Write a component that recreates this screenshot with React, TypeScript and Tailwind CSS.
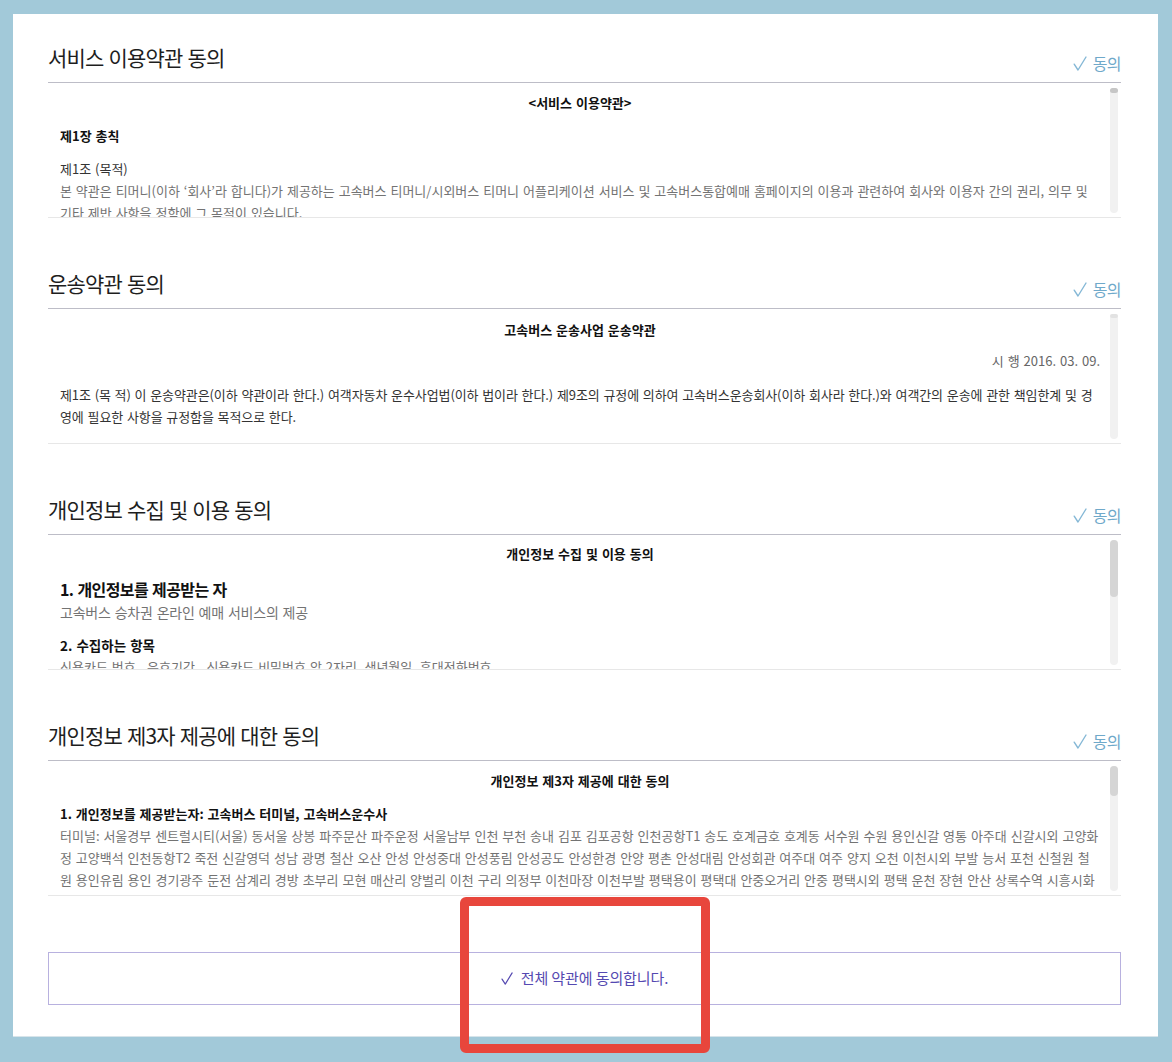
import React from "react";

const CheckMark = ({ className }: { className?: string }) => (
  <svg viewBox="0 0 14 15" className={className} fill="none">
    <polyline
      points="1.2,8.2 5,14 13,1"
      stroke="currentColor"
      strokeWidth="1.4"
      strokeLinecap="round"
      strokeLinejoin="round"
    />
  </svg>
);

// fake scrollbar drawn at the right side of each terms box
const ScrollBar = ({ thumb }: { thumb: string }) => (
  <div className="w-[8px] mt-[5px] mb-[4px] mr-[3px] shrink-0 rounded-full bg-[#f1f1f1]">
    <div className={`w-full rounded-full ${thumb}`} />
  </div>
);

const Section = ({
  title,
  thumb,
  first,
  children,
}: {
  title: string;
  thumb: string;
  first?: boolean;
  children: React.ReactNode;
}) => (
  <section className={first ? "" : "mt-[50px]"}>
    <div className="flex items-end justify-between border-b border-[#bdbdc7] pb-[9px]">
      <h2 className="text-[21px] leading-[30px] tracking-[-0.8px] [word-spacing:1px] text-[#1e1e1e] font-normal mb-[1px]">
        {title}
      </h2>
      <button className="flex items-center gap-[6px] text-[16px] leading-[20px] tracking-[-0.6px] text-[#6fa9ca]">
        <CheckMark className="w-[14px] h-[15px] text-[#85b8d6]" />
        동의
      </button>
    </div>
    <div className="flex h-[135px] border-b border-[#e7e7e7]">
      <div className="flex-1 overflow-hidden pl-[12px] pr-[10px] pt-[9px] text-[13px] leading-[22px] tracking-[0px] [word-spacing:1px] text-[#737373]">
        {children}
      </div>
      <ScrollBar thumb={thumb} />
    </div>
  </section>
);

export default function App() {
  return (
    <div className="relative h-[1062px] bg-[#a2c9d9] pt-[14px] pl-[13px] [font-family:'Noto_Sans_CJK_KR','Noto_Sans',sans-serif]">
      <div className="w-[1145px] h-[1023px] bg-white pt-[28px] pl-[35px] pr-[37px] border-b border-[#d7e4ea]">
        <Section title="서비스 이용약관 동의" thumb="h-[5px] bg-[#c6c6c6]" first>
          <p className="text-center font-bold text-[#111]">&lt;서비스 이용약관&gt;</p>
          <p className="mt-[11px] font-bold text-[#111]">제1장 총칙</p>
          <p className="mt-[11px] text-[#333]">제1조 (목적)</p>
          <p>
            본 약관은 티머니(이하 ‘회사’라 합니다)가 제공하는 고속버스 티머니/시외버스 티머니 어플리케이션 서비스 및 고속버스통합예매 홈페이지의 이용과 관련하여 회사와 이용자 간의 권리, 의무 및 기타 제반 사항을 정함에 그 목적이 있습니다.
          </p>
          <p className="mt-[11px] text-[#333]">제2조 (정의)</p>
          <p>이 약관에서 사용하는 용어의 정의는 다음과 같습니다.</p>
        </Section>

        <Section title="운송약관 동의" thumb="h-[4px] bg-[#e2e2e2]">
          <p className="pt-[1px] text-center font-bold text-[#111]">고속버스 운송사업 운송약관</p>
          <p className="mt-[9px] text-right text-[#666]">시 행 2016. 03. 09.</p>
          <p className="mt-[12px] text-[#333] tracking-[-0.1px]">
            제1조 (목 적) 이 운송약관은(이하 약관이라 한다.) 여객자동차 운수사업법(이하 법이라 한다.) 제9조의 규정에 의하여 고속버스운송회사(이하 회사라 한다.)와 여객간의 운송에 관한 책임한계 및 경영에 필요한 사항을 규정함을 목적으로 한다.
          </p>
          <p className="mt-[12px] text-[#333]">
            제2조 (적용범위) 회사가 운행하는 고속버스의 여객운송에 관하여는 이 약관에 의한다.
          </p>
        </Section>

        <Section title="개인정보 수집 및 이용 동의" thumb="h-[57px] bg-[#d5d5d5]">
          <p className="-mt-[1px] text-center font-bold text-[#111]">개인정보 수집 및 이용 동의</p>
          <p className="mt-[12px] text-[16px] leading-[24px] tracking-[-0.6px] font-bold text-[#111]">
            1. 개인정보를 제공받는 자
          </p>
          <p className="text-[14px] tracking-[-0.2px]">고속버스 승차권 온라인 예매 서비스의 제공</p>
          <p className="mt-[11px] text-[13.5px] font-bold text-[#111]">2. 수집하는 항목</p>
          <p>신용카드 번호 , 유효기간 , 신용카드 비밀번호 앞 2자리, 생년월일, 휴대전화번호</p>
          <p className="mt-[11px] text-[13.5px] font-bold text-[#111]">3. 수집 및 이용목적</p>
        </Section>

        <Section title="개인정보 제3자 제공에 대한 동의" thumb="h-[30px] bg-[#d5d5d5]">
          <p className="text-center font-bold text-[#111]">개인정보 제3자 제공에 대한 동의</p>
          <p className="mt-[11px] font-bold text-[#111]">1. 개인정보를 제공받는자: 고속버스 터미널, 고속버스운수사</p>
          <p className="break-all">
            터미널: 서울경부 센트럴시티(서울) 동서울 상봉 파주문산 파주운정 서울남부 인천 부천 송내 김포 김포공항 인천공항T1 송도 호계금호 호계동 서수원 수원 용인신갈 영통 아주대 신갈시외 고양화정 고양백석 인천동항T2 죽전 신갈영덕 성남 광명 철산 오산 안성 안성중대 안성풍림 안성공도 안성한경 안양 평촌 안성대림 안성회관 여주대 여주 양지 오천 이천시외 부발 능서 포천 신철원 철원 용인유림 용인 경기광주 둔전 삼계리 경방 초부리 모현 매산리 양벌리 이천 구리 의정부 이천마장 이천부발 평택용이 평택대 안중오거리 안중 평택시외 평택 운천 장현 안산 상록수역 시흥시화 안산 대부도
          </p>
        </Section>

        <button className="mt-[56px] flex h-[53px] w-full items-center justify-center gap-[8px] border border-[#b8b1df] text-[15px] tracking-[-0.1px] text-[#5549b1]">
          <CheckMark className="w-[12px] h-[15px] text-[#5549b1]" />
          전체 약관에 동의합니다.
        </button>
      </div>

      {/* annotation box over the button */}
      <div className="pointer-events-none absolute left-[460px] top-[897px] h-[156px] w-[250px] rounded-[6px] border-[9px] border-[#e8463c]" />
    </div>
  );
}
